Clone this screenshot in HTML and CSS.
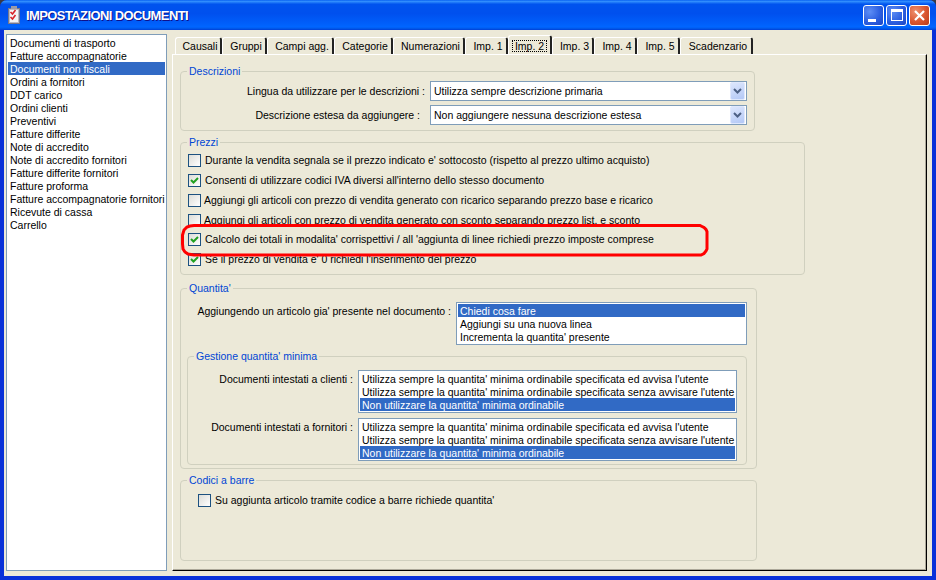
FILE: index.html
```html
<!DOCTYPE html>
<html lang="it">
<head>
<meta charset="utf-8">
<title>Impostazioni documenti</title>
<link rel="stylesheet" href="styles.css">
</head>
<body>
<div class="window">
  <header class="titlebar">
    <svg class="app-icon" width="14" height="18" viewBox="0 0 14 18">
      <rect x="1.5" y="2.5" width="11" height="15" fill="#b9b9c4" stroke="#77778a"/>
      <rect x="3" y="4" width="8" height="12" fill="#f4f4f4"/>
      <rect x="4" y="0" width="6" height="3" fill="#9a9aa8"/>
      <path d="M3.5 6l2 2 3-4M3.5 11l2 2 3-4" fill="none" stroke="#d8232a" stroke-width="1.6"/>
    </svg>
    <h1 class="title">IMPOSTAZIONI DOCUMENTI</h1>
    <div class="caption-buttons">
      <div class="cap-btn"><span class="min-glyph"></span></div>
      <div class="cap-btn"><span class="max-glyph"></span></div>
      <div class="cap-btn close">
        <svg width="13" height="13" viewBox="0 0 13 13"><path d="M2 2l9 9M11 2l-9 9" stroke="#fff" stroke-width="2.2"/></svg>
      </div>
    </div>
  </header>
  <div class="client">
    <div class="listbox side">
      <div class="item">Documenti di trasporto</div>
      <div class="item">Fatture accompagnatorie</div>
      <div class="item selected">Documenti non fiscali</div>
      <div class="item">Ordini a fornitori</div>
      <div class="item">DDT carico</div>
      <div class="item">Ordini clienti</div>
      <div class="item">Preventivi</div>
      <div class="item">Fatture differite</div>
      <div class="item">Note di accredito</div>
      <div class="item">Note di accredito fornitori</div>
      <div class="item">Fatture differite fornitori</div>
      <div class="item">Fatture proforma</div>
      <div class="item">Fatture accompagnatorie fornitori</div>
      <div class="item">Ricevute di cassa</div>
      <div class="item">Carrello</div>
    </div>
    <div class="tabarea">
      <div class="tabs">
        <div class="tab">Causali</div>
        <div class="tab">Gruppi</div>
        <div class="tab">Campi agg.</div>
        <div class="tab">Categorie</div>
        <div class="tab">Numerazioni</div>
        <div class="tab">Imp. 1</div>
        <div class="tab active"><span class="focus">Imp. 2</span></div>
        <div class="tab">Imp. 3</div>
        <div class="tab">Imp. 4</div>
        <div class="tab">Imp. 5</div>
        <div class="tab">Scadenzario</div>
      </div>
      <div class="panel">
        <fieldset class="group g-desc">
          <legend>Descrizioni</legend>
          <div class="field">
            <div class="label l-desc">Lingua da utilizzare per le descrizioni :</div>
            <div class="combo"><span class="combo-text">Utilizza sempre descrizione primaria</span><span class="combo-btn"><svg width="9" height="7" viewBox="0 0 9 7"><path d="M1 1l3.5 3.5L8 1" fill="none" stroke="#4d6185" stroke-width="2"/></svg></span></div>
          </div>
          <div class="field next">
            <div class="label l-desc inset">Descrizione estesa da aggiungere :</div>
            <div class="combo"><span class="combo-text">Non aggiungere nessuna descrizione estesa</span><span class="combo-btn"><svg width="9" height="7" viewBox="0 0 9 7"><path d="M1 1l3.5 3.5L8 1" fill="none" stroke="#4d6185" stroke-width="2"/></svg></span></div>
          </div>
        </fieldset>

        <fieldset class="group g-prezzi">
          <legend>Prezzi</legend>
          <div class="check"><span class="box"></span><span class="check-text">Durante la vendita segnala se il prezzo indicato e' sottocosto (rispetto al prezzo ultimo acquisto)</span></div>
          <div class="check"><span class="box on"><svg width="11" height="11" viewBox="0 0 11 11"><path d="M2 5l2.5 2.5L9 3" fill="none" stroke="#21a121" stroke-width="2"/></svg></span><span class="check-text">Consenti di utilizzare codici IVA diversi all'interno dello stesso documento</span></div>
          <div class="check tight"><span class="box"></span><span class="check-text">Aggiungi gli articoli con prezzo di vendita generato con ricarico separando prezzo base e ricarico</span></div>
          <div class="check tight"><span class="box"></span><span class="check-text">Aggiungi gli articoli con prezzo di vendita generato con sconto separando prezzo list. e sconto</span></div>
          <div class="check up"><span class="box on"><svg width="11" height="11" viewBox="0 0 11 11"><path d="M2 5l2.5 2.5L9 3" fill="none" stroke="#21a121" stroke-width="2"/></svg></span><span class="check-text">Calcolo dei totali in modalita' corrispettivi / all 'aggiunta di linee richiedi prezzo imposte comprese</span></div>
          <div class="check"><span class="box on"><svg width="11" height="11" viewBox="0 0 11 11"><path d="M2 5l2.5 2.5L9 3" fill="none" stroke="#21a121" stroke-width="2"/></svg></span><span class="check-text">Se il prezzo di vendita e' 0 richiedi l'inserimento del prezzo</span></div>
        </fieldset>

        <fieldset class="group g-qta">
          <legend>Quantita'</legend>
          <div class="field top">
            <div class="label l-qta">Aggiungendo un articolo gia' presente nel documento :</div>
            <div class="listbox w-qta">
              <div class="item selected">Chiedi cosa fare</div>
              <div class="item">Aggiungi su una nuova linea</div>
              <div class="item">Incrementa la quantita' presente</div>
            </div>
          </div>
          <fieldset class="group g-min">
            <legend>Gestione quantita' minima</legend>
            <div class="field top">
              <div class="label l-min">Documenti intestati a clienti :</div>
              <div class="listbox w-min">
                <div class="item">Utilizza sempre la quantita' minima ordinabile specificata ed avvisa l'utente</div>
                <div class="item">Utilizza sempre la quantita' minima ordinabile specificata senza avvisare l'utente</div>
                <div class="item selected">Non utilizzare la quantita' minima ordinabile</div>
              </div>
            </div>
            <div class="field top second">
              <div class="label l-min">Documenti intestati a fornitori :</div>
              <div class="listbox w-min">
                <div class="item">Utilizza sempre la quantita' minima ordinabile specificata ed avvisa l'utente</div>
                <div class="item">Utilizza sempre la quantita' minima ordinabile specificata senza avvisare l'utente</div>
                <div class="item selected">Non utilizzare la quantita' minima ordinabile</div>
              </div>
            </div>
          </fieldset>
        </fieldset>

        <fieldset class="group g-bar">
          <legend>Codici a barre</legend>
          <div class="check"><span class="box"></span><span class="check-text">Su aggiunta articolo tramite codice a barre richiede quantita'</span></div>
        </fieldset>
      </div>
    </div>
  </div>
  <svg class="annotation" width="528" height="33" viewBox="0 0 528 33">
    <path d="M13 1.5H519L521 2.5 523 3.5 525 5.5 526 7.5V25L525 27 523 29.5 520 31H13L7 30 4 28 2 25 1.5 20V11L3 6 6 3 9 2Z" fill="none" stroke="#f00" stroke-width="3"/>
  </svg>
</div>
</body>
</html>
```
FILE: styles.css
```css
* { box-sizing: border-box; }
html, body { margin: 0; padding: 0; }
body {
  width: 936px;
  height: 580px;
  overflow: hidden;
  background: #3a3a44;
  font-family: "Liberation Sans", Arial, sans-serif;
  font-size: 10.5px;
  line-height: 13px;
  color: #000;
}
.window {
  position: relative;
  width: 936px;
  height: 580px;
  display: flex;
  flex-direction: column;
  background: #0831d9;
  border-radius: 7px 7px 0 0;
  overflow: hidden;
}
.titlebar {
  height: 30px;
  flex: none;
  display: flex;
  align-items: center;
  padding: 0 6px 0 7px;
  background: linear-gradient(180deg, #0058ee 0, #3593ff 4%, #0053ee 14%, #0050ee 45%, #0060fb 80%, #0066ff 90%, #0055e5 96%, #003dd7 100%);
}
.app-icon { flex: none; margin-right: 5px; }
.title {
  margin: 0;
  font-size: 13px;
  letter-spacing: -0.6px;
  font-weight: bold;
  color: #fff;
  text-shadow: 1px 1px 0 #0f1089;
}
.caption-buttons { margin-left: auto; display: flex; gap: 2px; }
.cap-btn {
  width: 21px;
  height: 21px;
  display: flex;
  align-items: center;
  justify-content: center;
  position: relative;
  border: 1px solid #fff;
  border-radius: 3px;
  background: radial-gradient(circle at 30% 30%, #5e8ef5 0, #2c5fe0 55%, #1c44c4 100%);
}
.cap-btn.close { background: radial-gradient(circle at 30% 30%, #ee9170 0, #d9552f 55%, #b93c1a 100%); }
.min-glyph { width: 8px; height: 3px; background: #fff; align-self: flex-end; margin: 0 3px 3px 0; }
.max-glyph { width: 12px; height: 12px; border: 1px solid #fff; border-top-width: 3px; }

.client {
  flex: 1;
  margin: 0 4px 4px;
  padding: 4px 5px 5px 2px;
  display: flex;
  gap: 5px;
  background: #ece9d8;
  min-height: 0;
}
.listbox {
  padding: 1px;
  border: 1px solid #7f9db9;
  background: #fff;
}
.item {
  height: 13px;
  padding: 1px 0 0 2px;
  line-height: 12px;
  white-space: nowrap;
  overflow: hidden;
}
.item.selected { background: #316ac5; color: #fff; }
.side { width: 161px; flex: none; }

.tabarea {
  flex: 1;
  display: flex;
  flex-direction: column;
  margin-top: 2px;
  min-width: 0;
}
.tabs {
  height: 18px;
  flex: none;
  padding-left: 3px;
  display: grid;
  grid-template-columns: 47px 45px 67px 59px 72px 43px 44px 42px 43px 43px 73px;
  align-items: end;
}
.tab {
  height: 17px;
  padding-left: 4px;
  display: flex;
  align-items: center;
  justify-content: center;
  white-space: nowrap;
  border-top: 1px solid #fff;
  border-left: 1px solid #fff;
  border-right: 2px solid #222;
  border-radius: 3px 3px 0 0;
  background: #ece9d8;
}
.tab.active { height: 19px; margin-top: -2px; padding: 1px 0 0; }
.focus { padding: 0 3px; outline: 1px dotted #000; outline-offset: -1px; line-height: 12px; }

.panel {
  flex: 1;
  padding: 10px 0 0 7px;
  border-top: 1px solid #fff;
  border-left: 1px solid #fff;
  border-right: 1px solid #000;
  border-bottom: 1px solid #000;
  box-shadow: inset -1px -1px 0 #aca899;
  background: #ece9d8;
}
.group {
  margin: 0;
  padding: 0;
  min-width: 0;
  border: 1px solid #d0d0bf;
  border-radius: 4px;
}
.group legend {
  margin-left: 6px;
  padding: 0 2px;
  color: #0046d5;
  line-height: 13px;
}
.g-desc { width: 575px; height: 66px; padding-top: 3px; }
.g-prezzi { width: 625px; height: 139px; margin-top: 5px; padding-top: 1px; }
.g-qta { width: 577px; height: 187px; margin-top: 7px; padding-top: 7px; }
.g-min { width: 560px; height: 115px; margin: 5px 0 0 6px; padding-top: 7px; }
.g-bar { width: 577px; height: 87px; margin-top: 5px; padding-top: 3px; }

.field { display: flex; align-items: center; gap: 5px; }
.field.next { margin-top: 4px; }
.field.top { align-items: flex-start; }
.field.second { margin-top: 5px; }
.label { text-align: right; flex: none; white-space: nowrap; }
.field.top .label { margin-top: 3px; }
.l-desc { width: 244px; }
.l-desc.inset { padding-right: 5px; }
.l-qta { width: 270px; }
.l-min { width: 165px; }
.w-qta { width: 291px; }
.w-min { width: 379px; }

.combo {
  width: 317px;
  height: 20px;
  padding: 1px 1px 1px 3px;
  display: flex;
  align-items: center;
  justify-content: space-between;
  border: 1px solid #7f9db9;
  background: #fff;
}
.combo-btn {
  width: 15px;
  height: 18px;
  flex: none;
  display: flex;
  align-items: center;
  justify-content: center;
  border-radius: 2px;
  border: 1px solid #dfe8fd;
  background: linear-gradient(160deg, #dde7fd, #b3c8f6);
}

.check { height: 20px; margin-left: 7px; display: flex; align-items: center; gap: 4px; white-space: nowrap; }
.check.tight { gap: 3px; }
.check.up { margin-top: -1px; }
.check-text { padding-top: 1px; }
.g-bar .check { margin-left: 17px; }
.box {
  width: 13px;
  height: 13px;
  flex: none;
  display: flex;
  border: 1px solid #1c5180;
  background: linear-gradient(135deg, #dcdcd7, #fff);
}

.annotation { position: absolute; left: 181px; top: 224px; }
```
